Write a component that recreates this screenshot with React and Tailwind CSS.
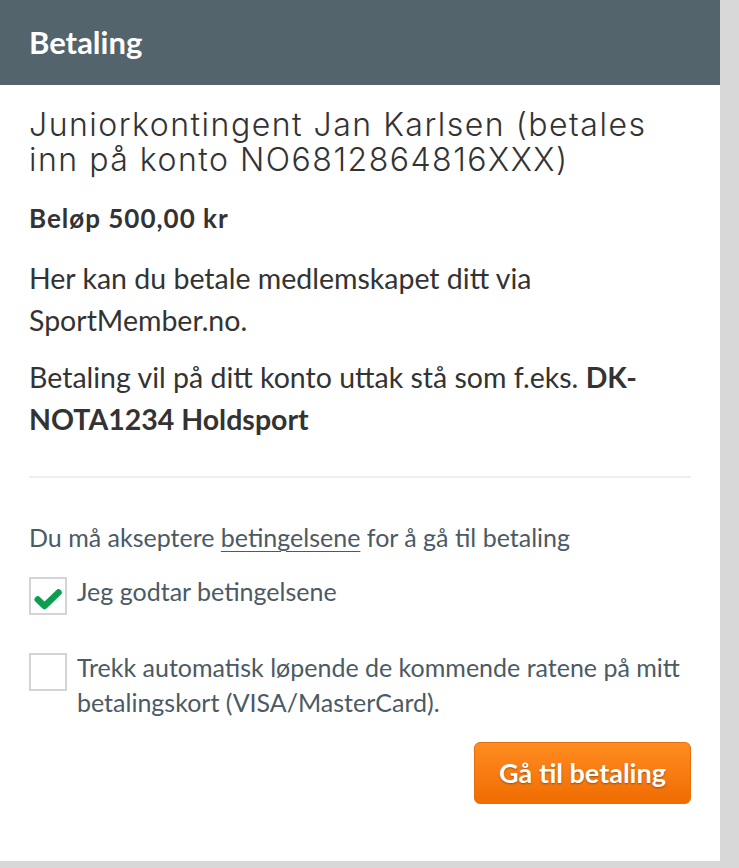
import { useState } from 'react';

function CheckRow({ checked, onToggle, children }) {
  return (
    <label className="flex items-start gap-[10px] cursor-pointer">
      <span
        onClick={onToggle}
        className="mt-[3px] w-[38px] h-[38px] shrink-0 border-2 border-[#d4d4d4] bg-white flex items-center justify-center"
      >
        {checked && (
          <svg viewBox="0 0 28 21" className="w-[28px] h-[21px] mt-[7px]">
            <path d="M3.8 10.5 L10.5 17 L24.5 3.5" fill="none" stroke="#0b9e4f" strokeWidth="6.5" strokeLinecap="round" strokeLinejoin="round" />
          </svg>
        )}
      </span>
      <span className="text-[25px] leading-[35px] text-[#4b5a64]">{children}</span>
    </label>
  );
}

export default function App() {
  const [accept, setAccept] = useState(true);
  const [auto, setAuto] = useState(false);

  return (
    <div className="h-[868px] bg-[#d8d8d8] flex" style={{ fontFamily: 'Lato, "Open Sans", sans-serif' }}>
      <div className="w-[720px] h-[861px] bg-white flex flex-col">
        <div className="h-[85px] bg-[#53646d] flex items-center px-[29px]">
          <h1 className="text-white font-bold text-[31px]">Betaling</h1>
        </div>

        <div className="px-[29px] pt-[22px] text-[#333]">
          <h2
            className="text-[32px] leading-[35px] font-light text-[#333] tracking-[1.5px]"
            style={{ fontFamily: 'Inter, "Noto Sans", sans-serif' }}
          >
            Juniorkontingent Jan Karlsen (betales inn på konto NO6812864816XXX)
          </h2>

          <p className="mt-[25px] text-[26px] font-bold leading-[32px] tracking-[1px]">Beløp 500,00 kr</p>

          <p className="mt-[23px] text-[28.5px] leading-[42px]">
            Her kan du betale medlemskapet ditt via SportMember.no.
          </p>

          <p className="mt-[15px] text-[28.5px] leading-[42px]">
            Betaling vil på ditt konto uttak stå som f.eks. <b>DK-NOTA1234 Holdsport</b>
          </p>

          <div className="mt-[36px] border-t-2 border-[#efefef]" />

          <p className="mt-[44px] text-[25px] leading-[30px] text-[#4b5a64]">
            Du må akseptere <a className="underline underline-offset-[4px] decoration-1">betingelsene</a> for å gå til betaling
          </p>

          <div className="mt-[22px] flex flex-col gap-[35px]">
            <CheckRow checked={accept} onToggle={() => setAccept(!accept)}>Jeg godtar betingelsene</CheckRow>
            <CheckRow checked={auto} onToggle={() => setAuto(!auto)}>
              Trekk automatisk løpende de kommende ratene på mitt betalingskort (VISA/MasterCard).
            </CheckRow>
          </div>

          <div className="mt-[22px] flex justify-end">
            <button
              className="h-[62px] w-[217px] rounded-[6px] border border-[#e46f0c] text-white font-bold text-[27px] bg-gradient-to-b from-[#ff8c1f] to-[#f06c00]"
              style={{ textShadow: '0 1px 2px rgba(0,0,0,0.35)' }}
            >
              Gå til betaling
            </button>
          </div>
        </div>
      </div>
    </div>
  );
}
